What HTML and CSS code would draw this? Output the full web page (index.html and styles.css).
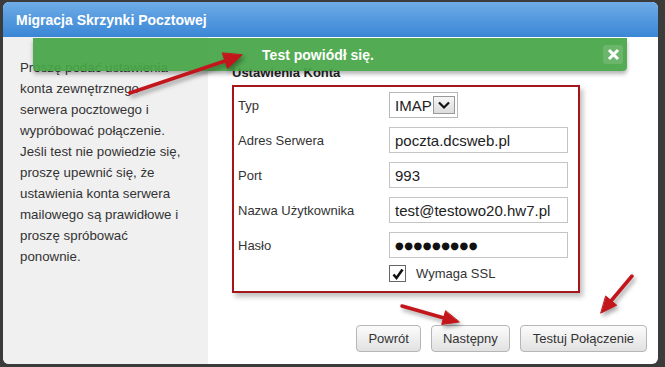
FILE: index.html
```html
<!DOCTYPE html>
<html lang="pl">

<head>
  <meta charset="UTF-8">
  <meta name="viewport" content="width=device-width, initial-scale=1.0">
  <title>Migracja Skrzynki Pocztowej</title>
  <link rel="stylesheet" href="styles.css">
</head>

<body>
  <div class="dialog">
    <header class="dialog-header">Migracja Skrzynki Pocztowej</header>
    <div class="dialog-body">
      <aside class="help">
        <p>Proszę podać ustawienia konta zewnętrznego serwera pocztowego i wypróbować połączenie. Jeśli test nie powiedzie się, proszę upewnić się, że ustawienia konta serwera mailowego są prawidłowe i proszę spróbować ponownie.</p>
      </aside>
      <section class="settings">
        <h4>Ustawienia Konta</h4>
        <div class="account-box">
          <label>Typ</label>
          <div class="select">
            <span>IMAP</span>
            <span class="select-btn">
              <svg width="14" height="10" viewBox="0 0 14 10"><path d="M2 2.5 L7 7.5 L12 2.5" fill="none" stroke="#111" stroke-width="2.2"/></svg>
            </span>
          </div>
          <label>Adres Serwera</label>
          <input class="field" type="text" value="poczta.dcsweb.pl">
          <label>Port</label>
          <input class="field" type="text" value="993">
          <label>Nazwa Użytkownika</label>
          <input class="field" type="text" value="test@testowo20.hw7.pl">
          <label>Hasło</label>
          <div class="field password">●●●●●●●●●</div>
          <span></span>
          <div class="check">
            <span class="check-box">
              <svg width="14" height="14" viewBox="0 0 14 14"><path d="M2.5 7.5 L5.5 11 L11.5 2.5" fill="none" stroke="#111" stroke-width="2.6"/></svg>
            </span>
            Wymaga SSL
          </div>
        </div>
        <div class="buttons">
          <button>Powrót</button>
          <button>Następny</button>
          <button class="wide">Testuj Połączenie</button>
        </div>
      </section>
    </div>
    <div class="notice">
      <span class="notice-text">Test powiódł się.</span>
      <span class="notice-close">
        <svg width="13" height="13" viewBox="0 0 13 13"><path d="M2 2 L11 11 M11 2 L2 11" stroke="#fff" stroke-width="3"/></svg>
      </span>
    </div>
  </div>

  <!-- annotation arrows -->
  <svg class="arrows" width="665" height="367" viewBox="0 0 665 367">
    <g fill="#c3161c" stroke="#c3161c" stroke-linecap="round">
      <line x1="130" y1="93" x2="225" y2="61" stroke-width="3.5"/>
      <polygon points="242,55 227.6,68.4 222.4,53.2" stroke-width="1"/>
      <line x1="402" y1="306" x2="444" y2="318" stroke-width="3.5"/>
      <polygon points="459,322 441.7,324.4 445.5,311" stroke-width="1"/>
      <line x1="632" y1="276" x2="611" y2="301" stroke-width="3.5"/>
      <polygon points="601,313 616.7,305.2 605.9,296.2" stroke-width="1"/>
    </g>
  </svg>
</body>

</html>
```

FILE: styles.css
```css
body,
html {
  margin: 0;
  padding: 0;
  height: 367px;
  overflow: hidden;
}

body {
  position: relative;
  background-color: #3b3b3b;
  font-family: 'Liberation Sans', Arial, sans-serif;
  color: #333;
}

.dialog {
  position: relative;
  width: 655px;
  height: 362px;
  margin: 2px 0 0 3px;
  background-color: #fff;
  border-radius: 6px;
  overflow: hidden;
  display: flex;
  flex-direction: column;
}

.dialog-header {
  height: 35px;
  line-height: 36px;
  padding-left: 13px;
  background: linear-gradient(#6eace7, #3a86d5);
  color: #fff;
  font-size: 14px;
  font-weight: bold;
}

.dialog-body {
  flex: 1;
  display: flex;
}

.help {
  width: 205px;
  background-color: #f0f0f0;
  padding: 20px 0 0 17px;
  box-sizing: border-box;
}

.help p {
  width: 166px;
  margin: 0;
  font-size: 13.3px;
  line-height: 21px;
}

.settings {
  flex: 1;
  display: flex;
  flex-direction: column;
  padding: 28px 11px 12px 24px;
}

.settings h4 {
  margin: 0 0 4px;
  font-size: 13px;
  line-height: 16px;
  color: #222;
}

.account-box {
  width: 348px;
  height: 208px;
  box-sizing: border-box;
  border: 2px solid #a3171b;
  box-shadow: 3px 4px 5px rgba(0, 0, 0, 0.25);
  padding: 5px 0 0 4px;
  display: grid;
  grid-template-columns: 151px 179px;
  row-gap: 9px;
  align-items: center;
  align-content: start;
}

.account-box label {
  font-size: 13px;
  color: #333;
}

.select {
  width: 69px;
  height: 26px;
  box-sizing: border-box;
  border: 1px solid #b8b8b8;
  display: flex;
  align-items: center;
  justify-content: space-between;
  padding: 0 2px 0 5px;
  font-size: 15px;
  color: #222;
}

.select-btn {
  width: 20px;
  height: 16px;
  border: 1px solid #999;
  background: linear-gradient(#f6f6f6, #dcdcdc);
  display: flex;
  align-items: center;
  justify-content: center;
}

.field {
  width: 179px;
  height: 26px;
  box-sizing: border-box;
  border: 1px solid #c4c4c4;
  padding: 0 5px;
  margin: 0;
  font-family: 'Liberation Sans', Arial, sans-serif;
  font-size: 15px;
  color: #222;
  background: #fff;
}

.password {
  display: flex;
  align-items: center;
  font-family: 'DejaVu Sans', sans-serif;
  font-size: 10px;
  letter-spacing: 0.5px;
  color: #111;
}

.check {
  display: flex;
  align-items: center;
  gap: 10px;
  font-size: 13px;
  margin-top: -2px;
}

.check-box {
  width: 15px;
  height: 15px;
  border: 1px solid #666;
  background: #fff;
  display: flex;
  align-items: center;
  justify-content: center;
}

.buttons {
  margin-top: auto;
  align-self: flex-end;
  display: flex;
  gap: 10px;
}

.buttons button {
  height: 27px;
  padding: 0 11px;
  border: 1px solid #b6b6b6;
  border-radius: 4px;
  background: linear-gradient(#fcfcfc, #e1e1e1);
  font-family: 'Liberation Sans', Arial, sans-serif;
  font-size: 13px;
  color: #333;
}

.buttons .wide {
  padding: 0 12px;
}

.notice {
  position: absolute;
  left: 30px;
  top: 36px;
  width: 594px;
  height: 33px;
  box-sizing: border-box;
  padding-right: 4px;
  background-color: rgba(70, 165, 70, 0.93);
  border-radius: 0 0 4px 4px;
  box-shadow: 0 3px 4px rgba(0, 0, 0, 0.3);
  display: flex;
  align-items: center;
}

.notice-text {
  flex: 1;
  text-align: center;
  color: #fff;
  font-size: 14px;
  font-weight: bold;
}

.notice-close {
  width: 20px;
  height: 19px;
  border-radius: 3px;
  background-color: rgba(255, 255, 255, 0.14);
  display: flex;
  align-items: center;
  justify-content: center;
}

.arrows {
  position: absolute;
  top: 0;
  left: 0;
  pointer-events: none;
  filter: drop-shadow(2px 3px 2px rgba(0, 0, 0, 0.35));
}
```
